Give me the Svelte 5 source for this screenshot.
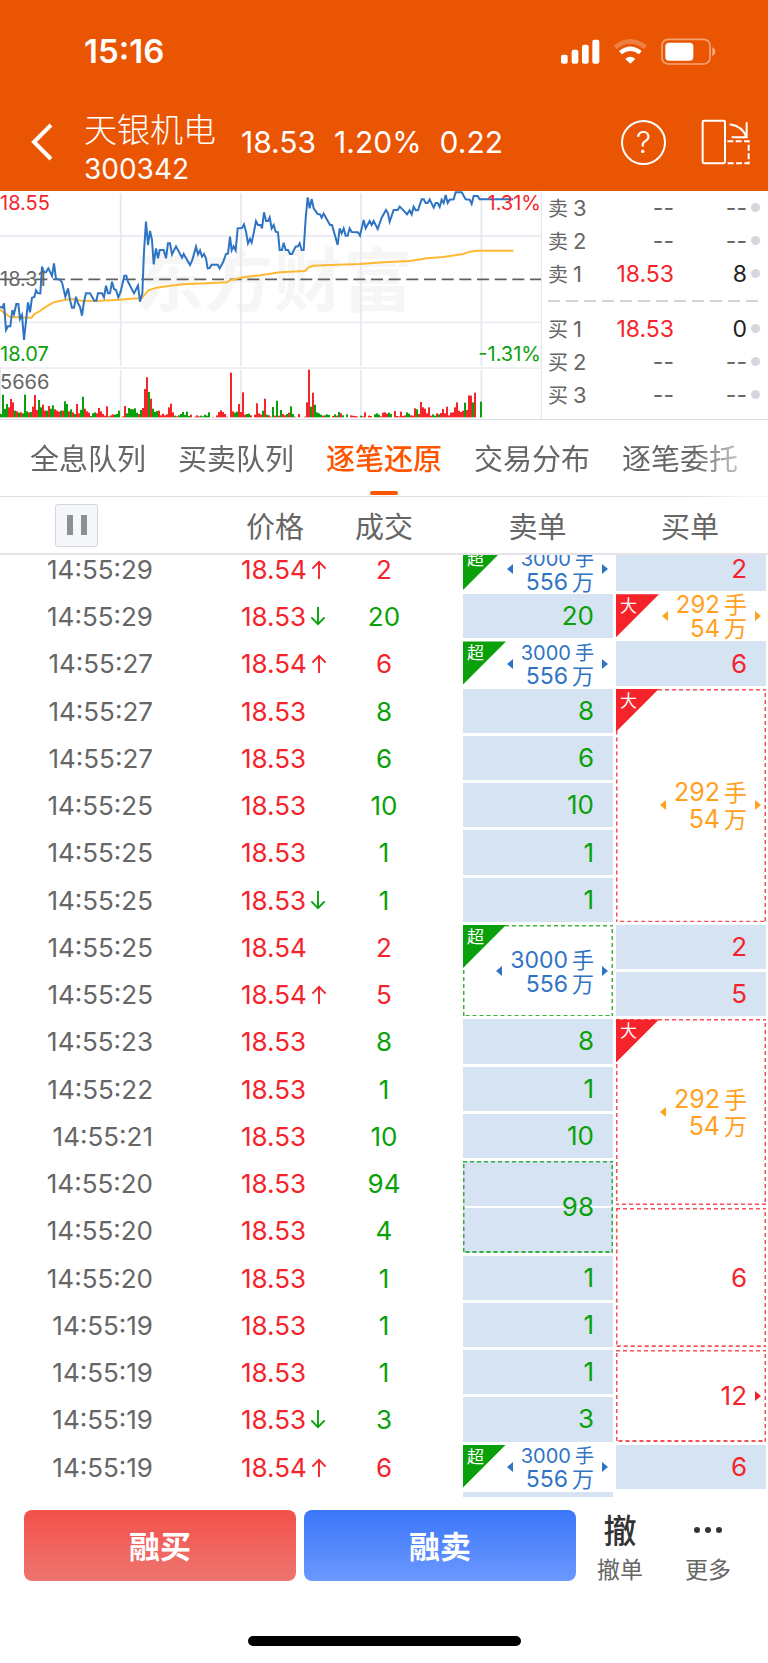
<script>
  let activeTab = $state("逐笔还原");
  let paused = $state(false);

  const tabs = ["全息队列", "买卖队列", "逐笔还原", "交易分布", "逐笔委托"];

  const asks = [
    { name: "卖", level: 3, price: "--", volume: "--" },
    { name: "卖", level: 2, price: "--", volume: "--" },
    { name: "卖", level: 1, price: "18.53", volume: "8" },
  ];

  const bids = [
    { name: "买", level: 1, price: "18.53", volume: "0" },
    { name: "买", level: 2, price: "--", volume: "--" },
    { name: "买", level: 3, price: "--", volume: "--" },
  ];

  // span: how many trades belong to the same order
  const superSell = { tag: "超", hands: "3000", money: "556", left: true, right: true };
  const bigBuy = { tag: "大", hands: "292", money: "54", left: true, right: true };

  const trades = [
    { time: "14:55:29", price: "18.54", dir: "up", volume: 2, side: "buy", sell: { ...superSell }, buy: { count: 2 } },
    { time: "14:55:29", price: "18.53", dir: "down", volume: 20, side: "sell", sell: { count: 20 }, buy: { ...bigBuy } },
    { time: "14:55:27", price: "18.54", dir: "up", volume: 6, side: "buy", sell: { ...superSell }, buy: { count: 6 } },
    { time: "14:55:27", price: "18.53", volume: 8, side: "sell", sell: { count: 8 }, buy: { ...bigBuy, span: 5 } },
    { time: "14:55:27", price: "18.53", volume: 6, side: "sell", sell: { count: 6 } },
    { time: "14:55:25", price: "18.53", volume: 10, side: "sell", sell: { count: 10 } },
    { time: "14:55:25", price: "18.53", volume: 1, side: "sell", sell: { count: 1 } },
    { time: "14:55:25", price: "18.53", dir: "down", volume: 1, side: "sell", sell: { count: 1 } },
    { time: "14:55:25", price: "18.54", volume: 2, side: "buy", sell: { ...superSell, span: 2 }, buy: { count: 2 } },
    { time: "14:55:25", price: "18.54", dir: "up", volume: 5, side: "buy", buy: { count: 5 } },
    { time: "14:55:23", price: "18.53", volume: 8, side: "sell", sell: { count: 8 }, buy: { ...bigBuy, right: false, span: 4 } },
    { time: "14:55:22", price: "18.53", volume: 1, side: "sell", sell: { count: 1 } },
    { time: "14:55:21", price: "18.53", volume: 10, side: "sell", sell: { count: 10 } },
    { time: "14:55:20", price: "18.53", volume: 94, side: "sell", sell: { count: 98, span: 2, filled: true } },
    { time: "14:55:20", price: "18.53", volume: 4, side: "sell", buy: { count: 6, span: 3 } },
    { time: "14:55:20", price: "18.53", volume: 1, side: "sell", sell: { count: 1 } },
    { time: "14:55:19", price: "18.53", volume: 1, side: "sell", sell: { count: 1 } },
    { time: "14:55:19", price: "18.53", volume: 1, side: "sell", sell: { count: 1 }, buy: { count: 12, span: 2, right: true } },
    { time: "14:55:19", price: "18.53", dir: "down", volume: 3, side: "sell", sell: { count: 3 } },
    { time: "14:55:19", price: "18.54", dir: "up", volume: 6, side: "buy", sell: { ...superSell }, buy: { count: 6 } },
    { time: "", price: "", volume: "", sell: { count: " " } },
  ];

  const priceLine =
    "0,365 8,368 12,355 18,435 24,424 31,424 37,375 42,388 49,357 55,357 60,402 66,390 72,465 84,352 90,382 96,338 103,336 108,316 113,324 121,325 126,245 132,262 138,262 145,250 156,273 162,235 168,282 180,284 186,292 196,335 204,310 210,345 216,368 222,368 228,335 234,355 240,365 246,392 252,350 258,325 270,325 276,335 283,347 289,347 294,325 306,325 312,337 318,302 324,325 330,325 336,290 342,312 348,315 355,337 362,320 373,272 379,272 384,290 402,325 414,302 420,350 427,325 432,200 438,110 444,180 450,138 456,165 461,238 468,190 474,220 479,195 491,195 498,220 504,175 510,175 516,208 528,184 546,218 551,207 570,240 577,225 588,185 594,208 600,196 606,215 612,207 618,220 623,250 629,249 635,239 653,239 659,250 670,230 678,207 684,206 690,155 695,196 701,184 707,196 713,130 726,129 732,118 738,140 744,175 750,162 755,173 762,140 768,108 774,120 782,120 786,130 792,82 798,108 804,108 809,97 815,130 821,120 827,140 834,142 839,195 846,195 851,173 857,195 864,195 870,207 876,207 887,185 894,184 899,175 905,195 911,195 917,100 923,37 929,70 935,42 941,70 953,87 960,88 965,98 971,86 990,120 996,120 1013,180 1019,130 1025,145 1031,130 1037,152 1043,152 1049,130 1055,141 1074,142 1080,152 1091,105 1097,130 1109,108 1115,120 1121,108 1133,132 1145,98 1158,75 1164,85 1169,110 1181,75 1193,75 1199,65 1211,77 1221,88 1229,76 1235,88 1241,65 1247,76 1254,76 1265,43 1271,43 1277,54 1283,54 1289,43 1301,68 1307,54 1313,54 1319,66 1325,44 1331,54 1337,30 1343,54 1349,44 1361,43 1367,22 1385,22 1397,43 1409,44 1415,57 1421,33 1433,33 1439,43 1540,43";

  const averageLine =
    "0,372 8,380 30,396 95,398 102,388 120,378 140,364 160,352 190,346 215,342 250,348 300,347 360,344 390,341 425,340 445,316 470,308 500,304 550,298 620,295 680,292 690,286 730,277 780,271 840,262 915,258 925,248 940,242 1010,239 1080,237 1150,232 1230,228 1280,220 1330,216 1370,210 1390,207 1410,200 1430,197 1540,197";

  // one bar per minute, negative means the price fell
  const volumes = [
    -10, -68, -25, -40, 30, 55, 45, -20, 18, -14, 15, -12, -68, -18, 15, -16, 32, 67, 22, -52, -30, 38, 20, -20, 34,
    -26, -36, 24, 20, 17, -20, 20, -48, -40, 18, -24, 15, -10, 40, 12, -22, -62, 26, 18, 14, -4, -12, -15, 12, 28,
    18, 10, 5, 33, -3, 6, 9, -8, -10, -20, 0, 3, 34, -12, -28, -25, -24, -27, -14, 10, -22, 28, 85, 120, -76, 56,
    -26, -16, -19, 20, 6, 11, 6, 9, 30, 41, 15, -5, 3, -6, -10, -16, -7, -17, -4, 8, 0, 2, 6, 3, -5, -3, -8, -5,
    -15, 0, 1, 0, 6, 16, 21, 16, 10, 2, 0, 134, 18, -14, -17, 40, 16, 75, 8, -10, -11, 6, 0, 8, 42, 12, 8, -20, 56,
    -8, 6, 2, -31, 5, -50, 5, -22, 10, 6, -10, 14, -33, -10, 2, 0, 10, 0, 0, 2, 45, 143, -32, 74, -38, -15, -12,
    -8, 5, -6, -9, -7, 0, 4, -9, 5, -16, 12, -6, 0, -9, 0, 6, 5, 4, 3, 0, -5, 3, 15, 0, 5, 4, 0, -9, -12, -8, 3,
    14, 15, 11, -14, -10, 0, 19, 4, 3, 17, 4, 6, -15, -11, 6, 5, 27, -24, 10, 46, 30, 26, 12, 30, 5, -9, -5, 12,
    -9, 13, 25, 12, 32, 6, 14, 15, 30, 45, 20, 16, 20, -44, 22, 66, 65, -45, 74, 0, 0, -47,
  ];
</script>

{#snippet quoteRow(row)}
  <li class="quote-row">
    <span class="quote-name">{row.name}<b>{row.level}</b></span>
    <span class="quote-price" class:red={row.price !== "--"}>{row.price}</span>
    <span class="quote-volume" class:dark={row.volume !== "--"}>{row.volume}</span>
    <i class="dot"></i>
  </li>
{/snippet}

{#snippet orderCell(order, side, row)}
  <td
    class="order {side}"
    class:plain={order.count && !order.span}
    class:filled={order.filled}
    class:compact={order.tag && !order.span}
    rowspan={order.span ?? 1}
    style="grid-row: {row + 1} / span {order.span ?? 1}"
  >
    {#if order.span}
      <svg class="frame"><rect width="100%" height="100%" /></svg>
    {/if}
    {#if order.tag}
      <span class="tag">{order.tag}</span>
    {/if}
    <div class="order-body">
      {#if order.left}<i class="caret left"></i>{/if}
      {#if order.tag}
        <div class="amount">
          <div class="hands">{order.hands}<span class="unit">手</span></div>
          <div>{order.money}<span class="unit">万</span></div>
        </div>
      {:else}
        <div>{order.count}</div>
      {/if}
      <i class="caret right" class:off={!order.right}></i>
    </div>
  </td>
{/snippet}

<div class="page">
  <header>
    <div class="status-bar">
      <span class="clock">15:16</span>
      <svg class="status-icons" viewBox="530 112 471 81" fill="#fff">
        <rect x="533" y="162" width="20" height="27" rx="6" />
        <rect x="565" y="147" width="20" height="42" rx="6" />
        <rect x="596" y="132" width="20" height="57" rx="6" />
        <rect x="627" y="117" width="21" height="72" rx="6" />
        <path d="M696 140 Q741 104 786 140" fill="none" stroke="#fff" stroke-opacity=".25" stroke-width="14" />
        <path d="M711 156 Q741 132 771 156" fill="none" stroke="#fff" stroke-width="13" />
        <path d="M726 175 Q741 161 756 175 L741 189 Z" />
        <rect x="836" y="116" width="144" height="74" rx="19" fill="none" stroke="#fff" stroke-opacity=".45" stroke-width="5" />
        <rect x="846" y="126" width="84" height="54" rx="11" />
        <path d="M987 140 q9 4 9 13 q0 9 -9 13 z" fill-opacity=".5" />
      </svg>
    </div>
    <div class="title-bar">
      <button class="icon-btn back" aria-label="返回">
        <svg viewBox="0 0 24 40" fill="none" stroke="#fff" stroke-width="4"><path d="M21 3 4 20l17 17" /></svg>
      </button>
      <div class="stock">
        <h1>天银机电</h1>
        <span>300342</span>
      </div>
      <div class="figures"><span>18.53</span><span>1.20%</span><span>0.22</span></div>
      <button class="help" aria-label="帮助">?</button>
      <button class="icon-btn rotate" aria-label="横屏">
        <svg viewBox="952 355 150 137" fill="none" stroke="#fff" stroke-width="6">
          <rect x="957" y="360" width="67" height="127" rx="4" />
          <path d="M1038 370 Q1078 376 1087 408 M1089 364 V409 H1044" />
          <path d="M1031 421 H1095 V487 H1031" stroke-dasharray="18 7" />
        </svg>
      </button>
    </div>
  </header>

  <section class="market">
    <div class="chart">
      <svg viewBox="0 0 1626 684">
        <g transform="translate(0 -18)">
          <text class="watermark" x="405" y="364">东方财富</text>
          <path
            d="M362 24V543M723 24V543M1083 24V543M1444 24V543M362 555V698M723 555V698M1083 555V698M1444 555V698"
            stroke="#e4e8ef"
            stroke-width="5"
          />
          <path d="M0 153H1623M0 412H1623" stroke="#e4e8ef" stroke-width="4" />
          <path d="M0 549H1623M1624 18V700M1 549V700" stroke="#e1e2e6" stroke-width="3" />
          <path d="M0 283H1623" stroke="#606060" stroke-width="5" stroke-dasharray="36 17" />
          {#each volumes as v, i}
            <rect x={i * 6} y={697 - Math.abs(v)} width="6" height={Math.abs(v)} fill={v < 0 ? "#0aa00a" : "#f5262a"} />
          {/each}
          <polyline points={averageLine} fill="none" stroke="#ffb833" stroke-width="6" />
          <polyline points={priceLine} fill="none" stroke="#2f74c4" stroke-width="6" />
        </g>
      </svg>
      <span class="label high red">18.55</span>
      <span class="label mid">18.31</span>
      <span class="label low green">18.07</span>
      <span class="label rise red">1.31%</span>
      <span class="label fall green">-1.31%</span>
      <span class="label vol">5666</span>
    </div>
    <div class="quotes">
      <ul>
        {#each asks as row}{@render quoteRow(row)}{/each}
      </ul>
      <svg class="divider" height="2"><line x1="0" y1="1" x2="100%" y2="1" stroke="#d2d4dc" stroke-width="2" stroke-dasharray="12 6" /></svg>
      <ul>
        {#each bids as row}{@render quoteRow(row)}{/each}
      </ul>
    </div>
  </section>

  <nav>
    {#each tabs as tab}
      <button class="tab" class:active={tab === activeTab} onclick={() => (activeTab = tab)}>{tab}</button>
    {/each}
  </nav>

  <main>
    <table>
      <thead>
        <tr>
          <th class="pause-cell">
            <button class="pause" aria-label="暂停" aria-pressed={paused} onclick={() => (paused = !paused)}>
              <i></i><i></i>
            </button>
          </th>
          <th class="price">价格</th>
          <th class="volume">成交</th>
          <th>卖单</th>
          <th>买单</th>
        </tr>
      </thead>
      <tbody>
        {#each trades as trade, i}
          <tr>
            <td class="time" style="grid-row: {i + 1}">{trade.time}</td>
            <td class="price red" style="grid-row: {i + 1}">
              {trade.price}{#if trade.dir}<svg class="arrow {trade.dir}" viewBox="0 0 16 20" fill="none" stroke="currentColor" stroke-width="2"
                  ><path d="M8 20V2M1 9l7-7 7 7" /></svg
                >{/if}
            </td>
            <td class="volume" class:red={trade.side === "buy"} class:green={trade.side === "sell"} style="grid-row: {i + 1}"
              >{trade.volume}</td
            >
            {#if trade.sell}{@render orderCell(trade.sell, "sell", i)}{/if}
            {#if trade.buy}{@render orderCell(trade.buy, "buy", i)}{/if}
          </tr>
        {/each}
      </tbody>
    </table>
  </main>

  <footer>
    <div class="actions">
      <div class="trade-btns">
        <button class="trade buy-btn">融买</button>
        <button class="trade sell-btn">融卖</button>
      </div>
      <button class="more"><strong>撤</strong><span>撤单</span></button>
      <button class="more">
        <svg viewBox="0 0 30 8" fill="#333"><circle cx="4" cy="4" r="3" /><circle cx="15" cy="4" r="3" /><circle cx="26" cy="4" r="3" /></svg>
        <span>更多</span>
      </button>
    </div>
    <div class="home-indicator"></div>
  </footer>
</div>

<style>
  :global(body) {
    background: #fff;
  }

  .page {
    display: flex;
    flex-direction: column;
    height: 100vh;
    overflow: hidden;
    font-family: Inter, "Noto Sans CJK SC", sans-serif;
    color: #666;
    background: #fff;
  }

  button {
    padding: 0;
    border: none;
    background: none;
    font-family: inherit;
    color: inherit;
    cursor: pointer;
  }

  svg {
    display: block;
  }

  ul {
    margin: 0;
    padding: 0;
    list-style: none;
  }

  .red {
    color: #f5232a;
  }

  .green {
    color: #0aa00a;
  }

  .dark {
    color: #222;
  }

  header {
    flex: none;
    background: #ea5504;
    color: #fff;
  }

  .status-bar {
    display: flex;
    justify-content: space-between;
    align-items: center;
    height: 102px;
    padding: 0 51px 0 84px;
  }

  .clock {
    font-size: 33px;
    font-weight: 600;
  }

  .status-icons {
    width: 157px;
    height: 27px;
  }

  .title-bar {
    display: flex;
    align-items: center;
    box-sizing: border-box;
    height: 89px;
    padding: 0 17px 9px 30px;
  }

  .back svg {
    width: 24px;
    height: 40px;
  }

  .stock {
    margin: 10px 0 0 30px;
    font-size: 28px;
    line-height: 34px;
  }

  h1 {
    margin: 0;
    font-size: 33px;
    line-height: 44px;
    font-weight: 300;
  }

  .figures {
    display: flex;
    flex: 1;
    gap: 18px;
    margin-left: 25px;
    font-size: 30px;
  }

  .help {
    width: 45px;
    height: 45px;
    border: 2px solid #fff;
    border-radius: 50%;
    font-size: 30px;
    font-weight: 300;
    line-height: 40px;
  }

  .rotate {
    margin-left: 35px;
  }

  .rotate svg {
    width: 50px;
    height: 46px;
  }

  .market {
    display: grid;
    flex: none;
    grid-template-columns: 542fr 226fr;
    border-bottom: 1px solid #dcdde2;
  }

  .chart {
    position: relative;
  }

  .chart svg {
    width: 100%;
  }

  .watermark {
    font-size: 208px;
    font-weight: 700;
    fill: #f6f6f6;
  }

  .label {
    position: absolute;
    left: 0;
    font-size: 20px;
    line-height: 24px;
  }

  .high,
  .rise {
    top: 0;
  }

  .mid {
    top: 76px;
  }

  .low,
  .fall {
    top: 151px;
  }

  .rise,
  .fall {
    left: auto;
    right: 1px;
  }

  .vol {
    top: 179px;
  }

  .quotes {
    display: flex;
    flex-direction: column;
    padding: 0 8px 0 6px;
  }

  .quote-row {
    display: flex;
    align-items: center;
    height: 33px;
    font-size: 23px;
  }

  .quote-name {
    width: 44px;
    font-size: 20px;
  }

  .quote-name b {
    margin-left: 5px;
    font-size: 22px;
    font-weight: 400;
  }

  .quote-price {
    flex: 82;
    text-align: right;
  }

  .quote-volume {
    flex: 73;
    text-align: right;
  }

  .dot {
    width: 9px;
    height: 9px;
    margin-left: 4px;
    border-radius: 50%;
    background: #d4d7de;
  }

  .divider {
    width: 100%;
    margin: 10px 0;
  }

  nav {
    display: flex;
    flex: none;
    gap: 32px;
    height: 76px;
    padding-left: 30px;
    overflow: hidden;
    border-bottom: 1px solid #dcdde2;
    mask-image: linear-gradient(to right, #000 90%, rgba(0, 0, 0, 0.3) 97%);
  }

  .tab {
    position: relative;
    flex: none;
    padding-top: 4px;
    font-size: 29px;
    line-height: 44px;
  }

  .tab.active {
    color: #ff5500;
    font-weight: 500;
  }

  .tab.active::after {
    content: "";
    position: absolute;
    left: 50%;
    bottom: 1px;
    width: 28px;
    height: 4px;
    margin-left: -14px;
    border-radius: 2px;
    background: #ff5500;
  }

  main {
    flex: 1;
    min-height: 0;
    overflow: hidden;
  }

  table {
    display: block;
  }

  thead {
    display: block;
    position: relative;
    z-index: 1;
    background: #fff;
    border-bottom: 2px solid #e3e3e8;
  }

  thead tr,
  tbody {
    display: grid;
    grid-template-columns: 153fr 187fr 123fr 153fr 152fr;
  }

  thead tr {
    align-items: center;
    height: 56px;
  }

  th {
    padding: 0 4px 0 0;
    font-size: 29px;
    font-weight: 400;
  }

  th.pause-cell {
    padding: 0;
  }

  th.price {
    padding-left: 93px;
  }

  .pause {
    display: flex;
    justify-content: center;
    align-items: center;
    gap: 8px;
    box-sizing: border-box;
    width: 43px;
    height: 43px;
    margin: 0 auto;
    border: 1px solid #d4d6de;
    border-radius: 3px;
    background: #f6f7fa;
  }

  .pause i {
    width: 6px;
    height: 20px;
    background: #8e9098;
  }

  /* the list is scrolled a little, so the first row slides under the head */
  tbody {
    grid-template-rows: repeat(21, minmax(0, 1fr));
    height: 992px;
    margin-top: -8px;
  }

  tbody tr {
    display: contents;
  }

  td {
    padding: 0;
    font-size: 26px;
    line-height: 45px;
  }

  .time {
    grid-column: 1;
    text-align: right;
  }

  .price {
    grid-column: 2;
    padding-left: 88px;
    text-align: left;
  }

  .arrow {
    display: inline-block;
    width: 16px;
    height: 19px;
    margin-left: 4px;
  }

  .arrow.down {
    color: #0aa00a;
    transform: rotate(180deg);
  }

  .volume {
    grid-column: 3;
    padding-right: 35px;
    text-align: center;
  }

  .order {
    position: relative;
    display: flex;
    justify-content: flex-end;
    align-items: center;
    margin: 0 3px 3px 0;
    line-height: 26px;
  }

  .sell {
    grid-column: 4;
    color: #0aa00a;
  }

  .buy {
    grid-column: 5;
    margin-right: 2px;
    color: #f5232a;
  }

  .plain {
    background: #d6e3f3;
  }

  .filled {
    background: linear-gradient(#d6e3f3 49%, #fff 49%, #fff 51%, #d6e3f3 51%);
  }

  .frame {
    position: absolute;
    inset: 0;
    width: 100%;
    height: 100%;
  }

  .frame rect {
    fill: none;
    stroke: currentColor;
    stroke-width: 3;
    stroke-opacity: 0.8;
    stroke-dasharray: 4 3;
  }

  .order-body {
    position: relative;
    display: flex;
    align-items: center;
    padding-right: 5px;
  }

  .amount {
    padding-top: 2px;
    font-size: 25px;
    color: #ffa01e;
    text-align: right;
  }

  .sell .amount {
    font-size: 23px;
    line-height: 24px;
    color: #2f74c4;
  }

  .compact .amount {
    font-size: 24px;
    line-height: 23px;
  }

  .sell.compact .amount {
    font-size: 23px;
    line-height: 22px;
  }

  .sell.compact .hands {
    font-size: 20px;
  }

  .unit {
    margin-left: 4px;
    font-size: 23px;
  }

  .sell .unit {
    font-size: 22px;
  }

  .sell.compact .hands .unit {
    font-size: 19px;
  }

  .caret {
    border: 0 solid transparent;
    border-width: 5px 6px;
    color: #f5232a;
  }

  .amount ~ .caret,
  .caret:has(~ .amount) {
    color: #ffa01e;
  }

  .sell .caret {
    color: #2f74c4;
  }

  .caret.left {
    margin-right: 8px;
    border-left-width: 0;
    border-right-color: currentColor;
  }

  .caret.right {
    margin-left: 8px;
    border-right-width: 0;
    border-left-color: currentColor;
  }

  .caret.off {
    visibility: hidden;
  }

  .tag {
    position: absolute;
    top: 0;
    left: 0;
    width: 43px;
    height: 43px;
    padding-left: 4px;
    box-sizing: border-box;
    background: #0aa00a;
    clip-path: polygon(0 0, 100% 0, 0 100%);
    font-size: 17px;
    line-height: 24px;
    color: #fff;
  }

  .buy .tag {
    background: #f5232a;
  }

  footer {
    flex: none;
    background: #fff;
  }

  .actions {
    display: flex;
    padding: 13px 16px 0 24px;
  }

  .trade-btns {
    display: flex;
    flex: 552;
    gap: 8px;
  }

  .trade {
    flex: 1;
    box-sizing: border-box;
    height: 71px;
    padding-bottom: 3px;
    border-radius: 8px;
    font-size: 31px;
    font-weight: 700;
    color: #fff;
  }

  .buy-btn {
    background: linear-gradient(#f3504a, #ee756f);
  }

  .sell-btn {
    background: linear-gradient(#3b76fa, #6c98ff);
  }

  .more {
    display: flex;
    flex: 88;
    flex-direction: column;
    align-items: center;
    justify-content: space-between;
    height: 74px;
    font-size: 23px;
    line-height: 28px;
  }

  .more strong {
    font-size: 33px;
    line-height: 42px;
    font-weight: 500;
    color: #333;
  }

  .more svg {
    width: 30px;
    height: 8px;
    margin-top: 16px;
  }

  .home-indicator {
    width: 273px;
    height: 10px;
    margin: 52px auto 17px;
    border-radius: 5px;
    background: #000;
  }
</style>
